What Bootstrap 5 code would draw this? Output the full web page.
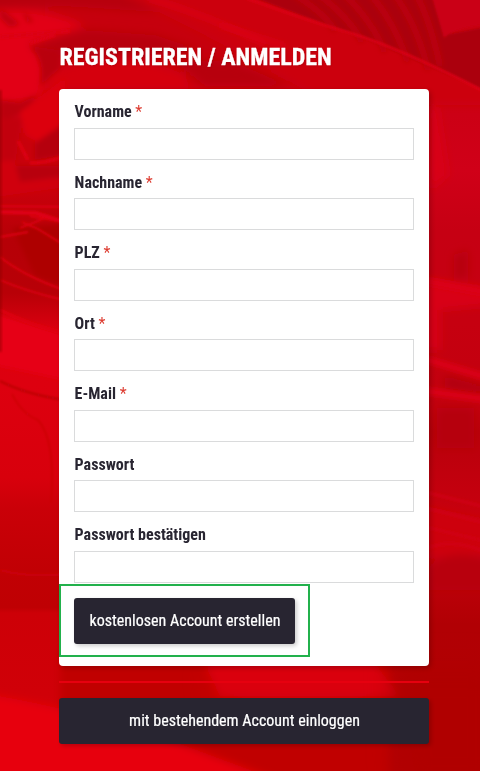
<!DOCTYPE html>
<html lang="de">
<head>
<meta charset="utf-8">
<meta name="viewport" content="width=device-width, initial-scale=1">
<title>Registrieren / Anmelden</title>
<link rel="stylesheet" href="https://cdn.jsdelivr.net/npm/bootstrap@5.3.0/dist/css/bootstrap.min.css">
<style>
  body { font-family: "Roboto Condensed", Roboto, sans-serif; font-stretch: 75%; font-size: 16px; color: #282531; background: #c90009; height: 771px; overflow: hidden; }
  .backdrop { z-index: -1; }
  .panel { width: 370px; margin-left: 59px; padding-top: 42px; }
  .headline { font-size: 24px; line-height: 30px; margin-bottom: 17px; padding-left: .4px; -webkit-text-stroke: .3px #fff; text-shadow: 1px 1px 2px rgba(0,0,0,.12); }
  .signup { padding: .6px 15px 22px; height: 577px; border-radius: 4px; box-shadow: 2px 2px 5px rgba(0,0,0,.2); }
  .field-label { height: 38.43px; padding: 11.8px 0 0 .6px; line-height: 22.4px; }
  .required { color: #dd3b30; font-weight: 400; }
  .field-input { height: 32px; border: 1px solid #dadbdc; }
  .btn-dark-flat { --bs-btn-color: #fff; --bs-btn-bg: #282531; --bs-btn-hover-bg: #37333f; --bs-btn-hover-color: #fff; --bs-btn-border-width: 0; --bs-btn-border-radius: 3px; height: 46px; padding: 0 0 0 1px; box-shadow: 2px 2px 4px rgba(0,0,0,.2); -webkit-text-stroke: .2px #fff; }
  .btn-create { width: 221px; margin-top: 15px; }
  .highlight { left: 0; top: 495px; width: 251px; height: 73px; border: 2px solid #22b14c; pointer-events: none; }
  .divider { height: 2px; margin: 15px 0; background: #e6000f; }
</style>
<script src="https://cdn.jsdelivr.net/npm/bootstrap@5.3.0/dist/js/bootstrap.bundle.min.js"></script>
</head>
<body>
<svg class="backdrop position-fixed top-0 start-0" width="480" height="771" viewBox="0 0 480 771" aria-hidden="true">
  <defs>
    <filter id="soft" x="-30%" y="-30%" width="160%" height="160%"><feGaussianBlur stdDeviation="4"/></filter>
    <filter id="wide" x="-30%" y="-30%" width="160%" height="160%"><feGaussianBlur stdDeviation="14"/></filter>
    <filter id="fine" x="-10%" y="-10%" width="120%" height="120%"><feGaussianBlur stdDeviation="1.3"/></filter>
    <filter id="mid" x="-20%" y="-20%" width="140%" height="140%"><feGaussianBlur stdDeviation="2.5"/></filter>
    <linearGradient id="leftSide" x1="0" y1="0" x2="0" y2="1">
      <stop offset="0" stop-color="#c4000c"/><stop offset=".1" stop-color="#d4000e"/><stop offset=".17" stop-color="#c8000b"/>
      <stop offset=".25" stop-color="#c8000b"/><stop offset=".31" stop-color="#b60007"/><stop offset=".38" stop-color="#b80007"/>
      <stop offset=".43" stop-color="#dc0010"/><stop offset=".5" stop-color="#dd000f"/><stop offset=".62" stop-color="#d8000c"/><stop offset=".66" stop-color="#ca0008"/>
      <stop offset=".74" stop-color="#c10004"/><stop offset=".788" stop-color="#bf0003"/><stop offset=".795" stop-color="#cd0007"/><stop offset=".9" stop-color="#d00008"/>
      <stop offset="1" stop-color="#d8000a"/>
    </linearGradient>
    <linearGradient id="rightSide" x1="0" y1="0" x2="0" y2="1">
      <stop offset="0" stop-color="#c70012"/><stop offset=".15" stop-color="#cc0015"/><stop offset=".22" stop-color="#d00018"/>
      <stop offset=".3" stop-color="#c60013"/><stop offset=".42" stop-color="#c60010"/><stop offset=".53" stop-color="#c2000e"/><stop offset=".56" stop-color="#b9000b"/>
      <stop offset=".64" stop-color="#c4000e"/><stop offset=".7" stop-color="#ca0010"/><stop offset=".74" stop-color="#bf000b"/><stop offset=".81" stop-color="#b10004"/>
      <stop offset="1" stop-color="#b30003"/>
    </linearGradient>
  </defs>
  <rect width="480" height="771" fill="url(#leftSide)"/>
  <rect x="250" width="230" height="771" fill="url(#rightSide)"/>
  <rect x="45" y="-10" width="355" height="98" fill="#c6000e" filter="url(#soft)"/>
  <!-- upper fabric folds -->
  <g filter="url(#soft)">
    <path d="M-10 -10 H150 L190 14 L60 6 L-10 8Z" fill="#b7000a"/>
    <path d="M85 30 L155 35 L200 50 L150 58 L55 55 L30 45Z" fill="#b7000a"/>
    <path d="M110 -12 H240 L420 55 L490 90 V105 H330 Q240 50 110 -12Z" fill="#cc0011"/>
    <path d="M-10 12 Q40 5 85 26 L28 44 Q50 65 38 98 L-10 105Z" fill="#e20013"/>
    <path d="M48 72 Q120 45 185 75 L190 90 H45Z" fill="#d50010"/>
    <path d="M175 62 L230 60 L290 86 H205Z" fill="#b70008"/>
  </g>
  <g filter="url(#fine)">
    <path d="M250 -4 H435 L445 35 L490 26 V93 L380 45Z" fill="#ab0009"/>
    <path d="M430 -10 H490 V24 Q455 26 444 38Z" fill="#ca0016"/>
  </g>
  <g fill="none" stroke="#bd000d" stroke-width="6" filter="url(#mid)">
    <path d="M293 -6 Q325 13 335 31M318 -6 Q350 18 362 42M344 -6 Q372 21 385 52M370 -6 Q393 20 408 62M394 -6 Q417 24 428 70M416 -6 Q430 20 440 66"/>
  </g>
  <path d="M246 -2 Q300 18 350 33 T485 92" fill="none" stroke="#dd0018" stroke-width="2.5" filter="url(#fine)"/>
  <path d="M148 -2 Q210 16 265 44" fill="none" stroke="#d90013" stroke-width="5" filter="url(#mid)"/>
  <path d="M220 25 L285 46" fill="none" stroke="#d90013" stroke-width="5" filter="url(#mid)"/>
  <!-- left folds and ripples -->
  <g filter="url(#mid)">
    <path d="M0 8 L20 24 L10 27 L0 18ZM22 10 L34 22 L27 22Z" fill="#bf000c"/>
    <path d="M30 46 Q46 60 40 86 L60 68 V50Z" fill="#b90009"/>
    <path d="M0 100 L20 103 L38 94 L25 112 L0 122Z" fill="#bb0009"/>
    <path d="M20 112 L65 78 V122 L38 142 L25 135Z" fill="#dc0011"/>
    <path d="M0 118 H22 L15 165 H0Z" fill="#c2000a"/>
    <path d="M35 143 L65 123 V155 L35 160Z" fill="#b50007"/>
    <path d="M10 166 H65 V176 L20 182Z" fill="#b80008"/>
    <path d="M-5 162 L14 160 L20 182 L65 178 V187 L-5 197Z" fill="#d0000e"/>
    <path d="M12 228 L64 224 V286 L35 276Z" fill="#ae0004"/>
    <path d="M-5 313 L65 335 V380 L-5 365Z" fill="#e60012"/>
  </g>
  <g fill="none" stroke="#dc0012" stroke-width="3.5" filter="url(#fine)">
    <path d="M0 37 L70 31M30 43 L55 35M18 141 L28 160M30 163 Q48 163 64 156"/>
  </g>
  <g fill="none" stroke="#df0012" stroke-width="1.8" filter="url(#fine)">
    <path d="M0 206 L64 207M22 222 L38 229 L64 245M20 228 L33 223 L50 216M0 237 L28 232M30 216 L64 222M0 257 Q24 276 64 290M0 280 Q28 292 64 300"/>
    <path d="M0 212 L36 213 L64 222" stroke-width="4"/>
    <path d="M0 310 Q30 325 64 333" stroke-width="3"/>
  </g>
  <path d="M0 381 Q25 394 64 400" fill="none" stroke="#bd0007" stroke-width="2" filter="url(#fine)"/>
  <path d="M12 394 Q22 414 38 420 Q56 440 51 503" fill="none" stroke="#ca0009" stroke-width="1.5" filter="url(#fine)"/>
  <path d="M0 570 Q30 578 64 574" fill="none" stroke="#ca0007" stroke-width="3" filter="url(#fine)"/>
  <rect x="-4" y="90" width="6" height="262" fill="#8c0005" opacity=".45" filter="url(#fine)"/>
  <!-- right bands -->
  <g filter="url(#soft)">
    <path d="M428 105 L438 108 L448 175 L430 190Z" fill="#d80018"/>
    <path d="M454 255 L468 250 V278 L454 280Z" fill="#b8000f"/>
    <path d="M425 279 L490 289 V305 L440 310 V350 H425Z" fill="#d80016"/>
    <path d="M445 376 L490 388 V394 L445 388Z" fill="#b0000a"/>
    <path d="M437 408 H474 V448 H437Z" fill="#b6000b"/>
    <path d="M425 506 L490 520 V553 L425 558Z" fill="#cd0011"/>
    <path d="M430 566 Q455 545 490 562 V590 H430Z" fill="#b80009"/>
  </g>
  <g fill="none" stroke="#dc0016" stroke-width="7" filter="url(#mid)">
    <path d="M425 281 L485 292M425 359 L485 377M425 391 L485 399"/>
  </g>
  <g fill="none" stroke="#d20012" stroke-width="4" filter="url(#fine)" opacity=".65">
    <path d="M425 492 L485 507M425 508 L485 523M425 527 L485 541M425 549 Q452 537 485 552"/>
  </g>
  <!-- lower folds -->
  <rect x="60" y="650" width="330" height="130" fill="#c00004" filter="url(#soft)"/>
  <ellipse cx="300" cy="681" rx="88" ry="22" fill="#d8000f" filter="url(#wide)"/>
  <path d="M205 664 H375 L400 696 H220Z" fill="#da000f" filter="url(#soft)"/>
  <path d="M-20 693 Q85 710 180 744 L290 785 H-20Z" fill="#e7000f" filter="url(#soft)"/>
  <path d="M395 665 H500 V790 H400Z" fill="#b00003" filter="url(#wide)"/>
</svg>

<main class="panel">
  <h1 class="headline text-white text-uppercase fw-bold">Registrieren / Anmelden</h1>
  <form class="signup bg-white position-relative">
    <div><label class="field-label d-block fw-bold" for="vorname">Vorname <span class="required">*</span></label><input class="field-input d-block w-100 bg-white" id="vorname" type="text"></div>
    <div><label class="field-label d-block fw-bold" for="nachname">Nachname <span class="required">*</span></label><input class="field-input d-block w-100 bg-white" id="nachname" type="text"></div>
    <div><label class="field-label d-block fw-bold" for="plz">PLZ <span class="required">*</span></label><input class="field-input d-block w-100 bg-white" id="plz" type="text"></div>
    <div><label class="field-label d-block fw-bold" for="ort">Ort <span class="required">*</span></label><input class="field-input d-block w-100 bg-white" id="ort" type="text"></div>
    <div><label class="field-label d-block fw-bold" for="email">E-Mail <span class="required">*</span></label><input class="field-input d-block w-100 bg-white" id="email" type="email"></div>
    <div><label class="field-label d-block fw-bold" for="passwort">Passwort</label><input class="field-input d-block w-100 bg-white" id="passwort" type="password"></div>
    <div><label class="field-label d-block fw-bold" for="bestaetigen">Passwort bestätigen</label><input class="field-input d-block w-100 bg-white" id="bestaetigen" type="password"></div>
    <button class="btn btn-dark-flat btn-create" type="button">kostenlosen Account erstellen</button>
    <div class="highlight position-absolute"></div>
  </form>
  <div class="divider"></div>
  <button class="btn btn-dark-flat w-100" type="button">mit bestehendem Account einloggen</button>
</main>
</body>
</html>
